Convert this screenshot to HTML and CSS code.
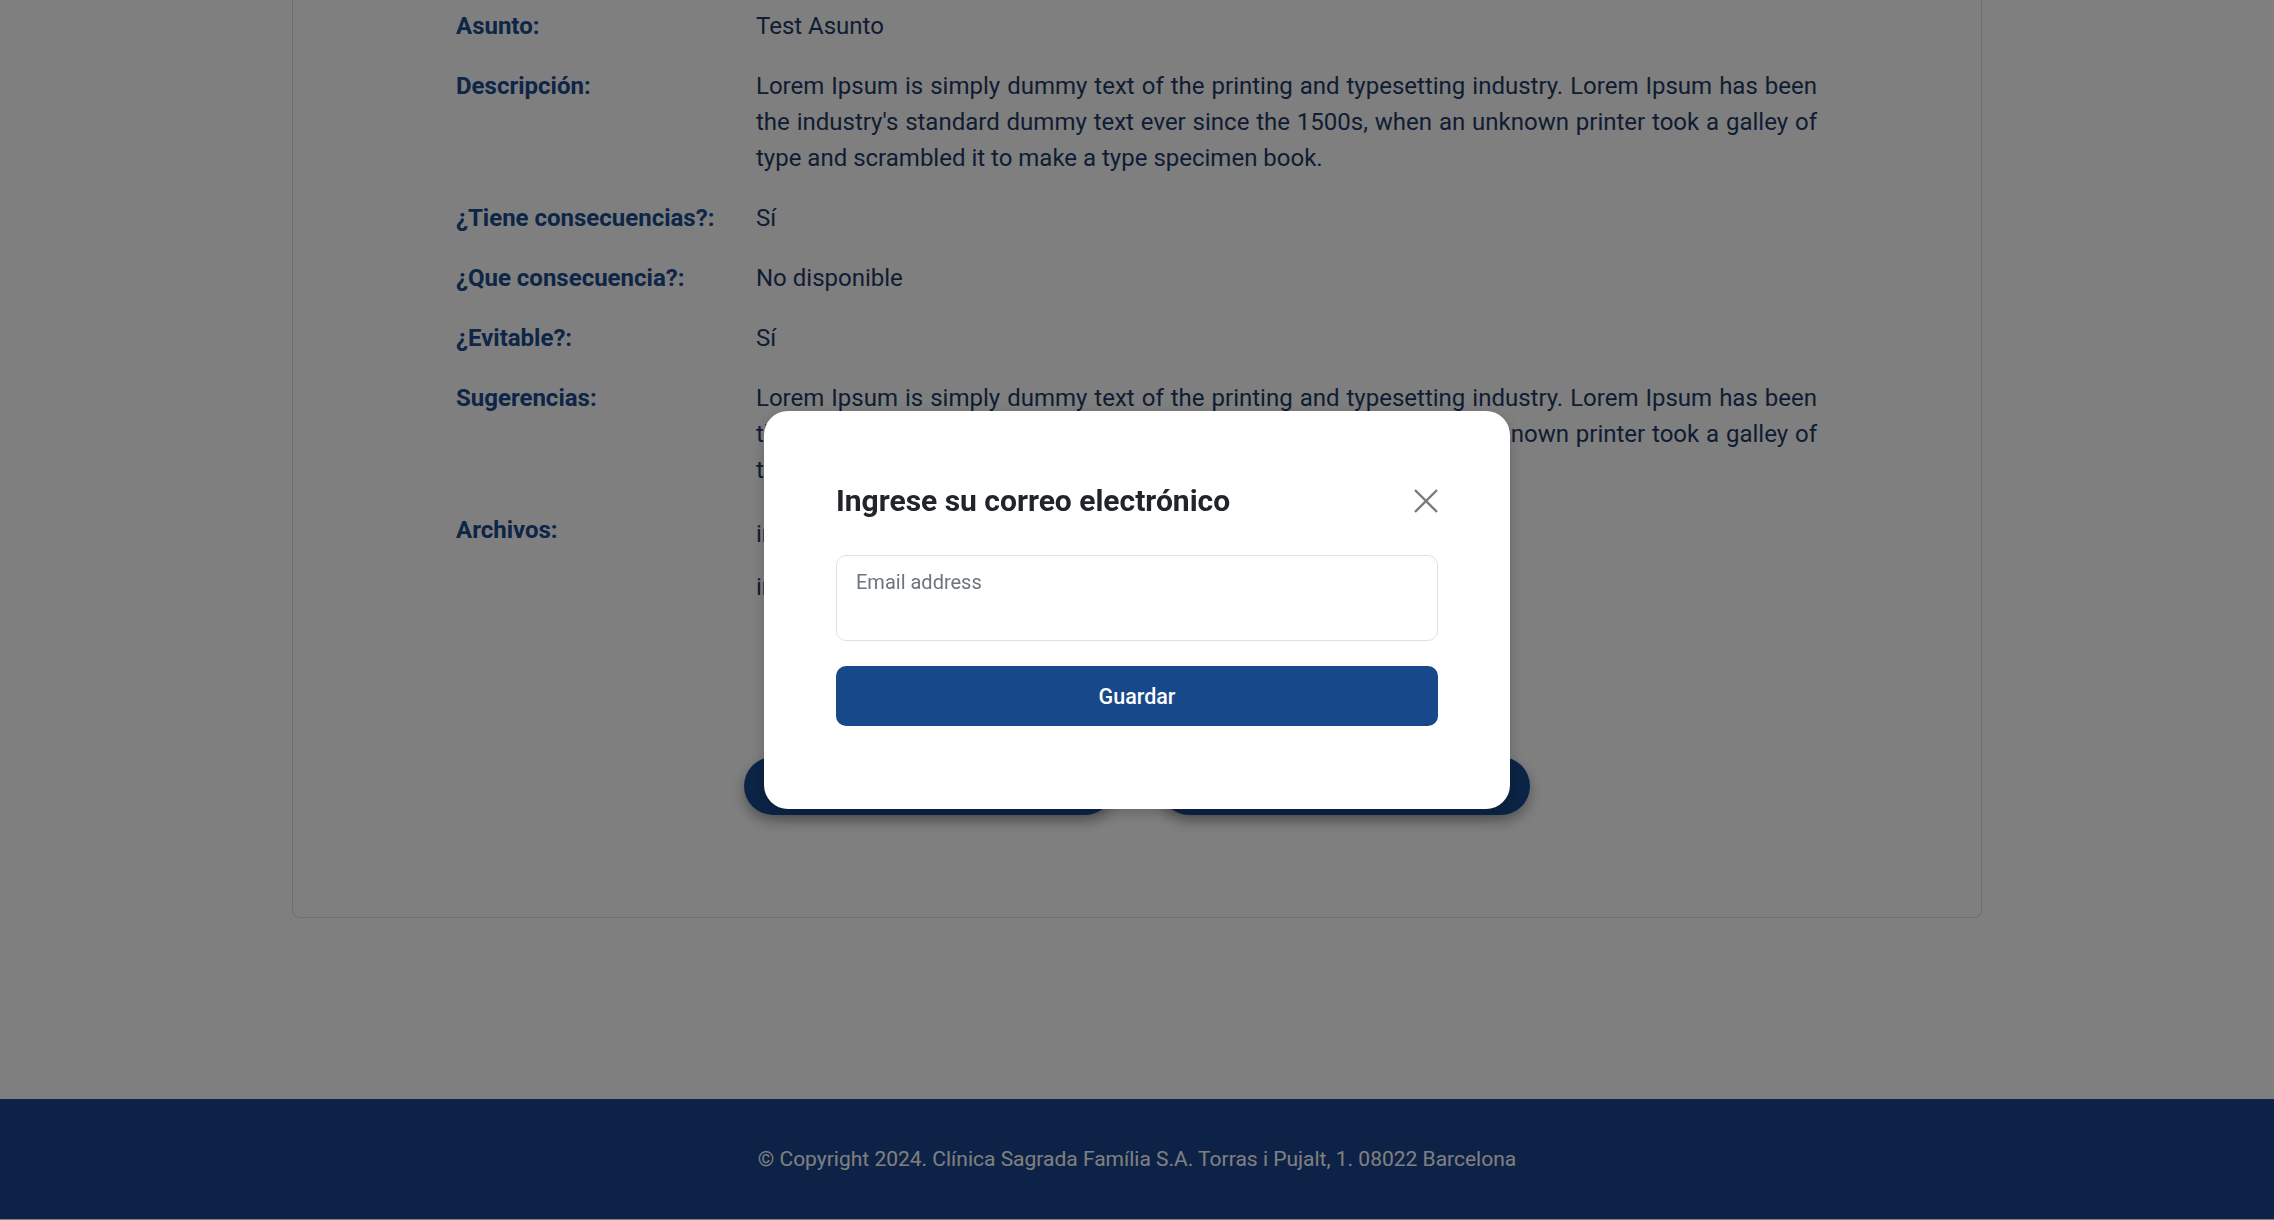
FILE: index.html
```html
<!DOCTYPE html>
<html lang="es">
<head>
<meta charset="utf-8">
<title>Detalle</title>
<link rel="stylesheet" href="styles.css">
</head>
<body>
<main class="page">
  <section class="card">
    <div class="details">
      <div class="label">Asunto:</div>
      <div class="value">Test Asunto</div>

      <div class="label">Descripción:</div>
      <div class="value">Lorem Ipsum is simply dummy text of the printing and typesetting industry. Lorem Ipsum has been the industry's standard dummy text ever since the 1500s, when an unknown printer took a galley of type and scrambled it to make a type specimen book.</div>

      <div class="label">¿Tiene consecuencias?:</div>
      <div class="value">Sí</div>

      <div class="label">¿Que consecuencia?:</div>
      <div class="value">No disponible</div>

      <div class="label">¿Evitable?:</div>
      <div class="value">Sí</div>

      <div class="label">Sugerencias:</div>
      <div class="value">Lorem Ipsum is simply dummy text of the printing and typesetting industry. Lorem Ipsum has been the industry's standard dummy text ever since the 1500s, when an unknown printer took a galley of type and scrambled it to make a type specimen book.</div>

      <div class="label">Archivos:</div>
      <div class="value files">
        <div class="file">imagen_incidencia_01.png</div>
        <div class="file">informe_adjunto.pdf</div>
      </div>
    </div>

    <div class="actions">
      <button class="pill">Volver</button>
      <button class="pill">Enviar por correo</button>
    </div>
  </section>
</main>

<footer class="footer">
  <p>© Copyright 2024. Clínica Sagrada Família S.A. Torras i Pujalt, 1. 08022 Barcelona</p>
</footer>

<div class="backdrop">
  <div class="modal">
    <div class="modal-header">
      <h2 class="modal-title">Ingrese su correo electrónico</h2>
      <button class="close" aria-label="Cerrar">
        <svg width="24" height="24" viewBox="0 0 24 24"><path d="M1 1 L23 23 M23 1 L1 23" stroke="#7a7a7a" stroke-width="2.4" fill="none"/></svg>
      </button>
    </div>
    <input class="email" type="email" placeholder="Email address">
    <button class="save">Guardar</button>
  </div>
</div>
</body>
</html>
```

FILE: styles.css
```css
* { box-sizing: border-box; }

html, body {
  margin: 0;
  padding: 0;
  background: #ffffff;
  font-family: Roboto, "Liberation Sans", Arial, sans-serif;
}

.page {
  display: flex;
  justify-content: center;
  padding-bottom: 181px;
}

.card {
  width: 1690px;
  border: 1px solid #dcdcdc;
  border-top: none;
  border-radius: 0 0 8px 8px;
  padding: 8px 164px 102px 163px;
}

.details {
  display: grid;
  grid-template-columns: 300px 1fr;
  row-gap: 24px;
  font-size: 24px;
  line-height: 36px;
}

.label {
  font-weight: 700;
  color: #1a4a8f;
}

.value {
  color: #1e3a66;
  text-align: justify;
}

.files {
  display: flex;
  flex-direction: column;
  gap: 9px;
}

.file {
  height: 44px;
  display: flex;
  align-items: center;
}

.actions {
  margin-top: 148px;
  display: flex;
  justify-content: center;
  gap: 46px;
}

.pill {
  width: 370px;
  height: 58px;
  border: none;
  border-radius: 29px;
  background: #17488a;
  color: #ffffff;
  font-family: Roboto, "Liberation Sans", Arial, sans-serif;
  font-size: 20px;
  font-weight: 500;
  box-shadow: 0 6px 14px rgba(0, 0, 0, 0.35);
}

.footer {
  height: 120px;
  background: #1a448e;
  display: flex;
  align-items: center;
  justify-content: center;
}

.footer p {
  margin: 0;
  color: #ffffff;
  font-size: 21px;
}

.backdrop {
  position: fixed;
  inset: 0;
  background: rgba(0, 0, 0, 0.5);
  display: flex;
  align-items: center;
  justify-content: center;
}

.modal {
  width: 746px;
  height: 398px;
  background: #ffffff;
  border-radius: 24px;
  padding: 73px 72px 0 72px;
  display: flex;
  flex-direction: column;
  box-shadow: 0 4px 14px rgba(0, 0, 0, 0.2);
}

.modal-header {
  display: flex;
  align-items: center;
  justify-content: space-between;
  height: 34px;
}

.modal-title {
  margin: 0;
  font-size: 30px;
  line-height: 34px;
  font-weight: 700;
  color: #212529;
}

.close {
  width: 24px;
  height: 24px;
  padding: 0;
  border: none;
  background: none;
  display: flex;
}

.email {
  margin-top: 37px;
  width: 100%;
  height: 86px;
  border: 1px solid #dee2e6;
  border-radius: 10px;
  padding: 14px 19px 47px 19px;
  font-family: Roboto, "Liberation Sans", Arial, sans-serif;
  font-size: 20px;
  line-height: 23px;
  color: #212529;
  outline: none;
}

.email::placeholder {
  color: #6c757d;
}

.save {
  margin-top: 25px;
  width: 100%;
  height: 60px;
  border: none;
  border-radius: 10px;
  background: #17488a;
  color: #ffffff;
  font-family: Roboto, "Liberation Sans", Arial, sans-serif;
  font-size: 21.5px;
  font-weight: 500;
}
```
